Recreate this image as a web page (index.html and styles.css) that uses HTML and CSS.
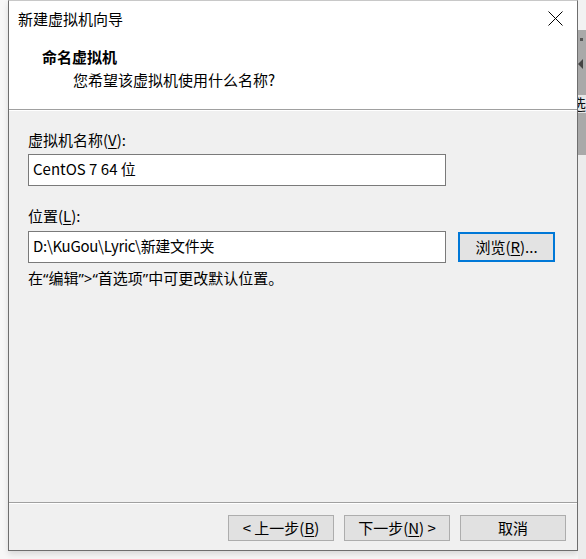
FILE: index.html
```html
<!DOCTYPE html>
<html lang="zh-CN">
<head>
<meta charset="utf-8">
<title>新建虚拟机向导</title>
<link rel="stylesheet" href="styles.css">
</head>
<body>
<div class="screen">
  <div class="gutter"></div>
  <div class="window">
    <div class="titlebar">
      <span class="title">新建虚拟机向导</span>
      <svg class="close" width="15" height="15" viewBox="0 0 15 15"><path d="M0.5 0.5 L14.5 14.5 M14.5 0.5 L0.5 14.5" stroke="#000" stroke-width="1" fill="none"/></svg>
    </div>
    <div class="header">
      <div class="head-title">命名虚拟机</div>
      <div class="head-sub">您希望该虚拟机使用什么名称?</div>
    </div>
    <div class="sep"></div>
    <div class="content">
      <div class="label">虚拟机名称(<u>V</u>):</div>
      <div class="field">CentOS 7 64 位</div>
      <div class="label label2">位置(<u>L</u>):</div>
      <div class="row">
        <div class="field field2">D:\KuGou\Lyric\新建文件夹</div>
        <div class="btn browse">浏览(<u>R</u>)...</div>
      </div>
      <div class="hint">在<span class="lat">“</span>编辑<span class="lat">”&gt;“</span>首选项<span class="lat">”</span>中可更改默认位置。</div>
    </div>
    <div class="sep"></div>
    <div class="footer">
      <div class="btn">&lt; 上一步(<u>B</u>)</div>
      <div class="btn">下一步(<u>N</u>) &gt;</div>
      <div class="btn">取消</div>
    </div>
  </div>
  <div class="desk">
    <div class="desk-top"></div>
    <div class="desk-mid">
      <span class="dot"></span>
      <span class="tri"></span>
      <span class="peek">选</span>
    </div>
    <div class="desk-bot"></div>
  </div>
</div>
</body>
</html>
```
FILE: styles.css
```css
html, body {
  margin: 0;
  padding: 0;
  background: #f6f6f6;
}
body {
  font-family: "Noto Sans CJK SC", "Noto Sans", sans-serif;
  font-size: 15px;
  color: #000;
}
.screen {
  display: flex;
  width: 586px;
  height: 559px;
  overflow: hidden;
}
.gutter {
  width: 8px;
  flex: none;
  background: #f7f7f7;
}
.window {
  width: 568px;
  height: 549px;
  flex: none;
  border: 1px solid #6e6e6e;
  border-top-color: #c8c8c8;
  display: flex;
  flex-direction: column;
  background: #f0f0f0;
  box-shadow: 0 3px 6px rgba(0,0,0,0.12);
}
.titlebar {
  height: 36px;
  background: #fff;
  display: flex;
  align-items: center;
  justify-content: space-between;
  padding-left: 9px;
}
.title {
  line-height: 36px;
}
.close {
  margin-right: 14px;
  margin-top: -1px;
}
.header {
  height: 72px;
  background: #fff;
  box-sizing: border-box;
  padding-top: 10px;
}
.head-title {
  font-weight: bold;
  line-height: 20px;
  padding-left: 33px;
}
.head-sub {
  line-height: 20px;
  padding-left: 64px;
  margin-top: 3px;
}
.sep {
  height: 1px;
  background: #a0a0a0;
  border-bottom: 1px solid #fff;
}
.content {
  flex: 1;
  padding: 19px 0 0 19px;
}
.label {
  line-height: 20px;
  margin-bottom: 4px;
}
.label2 {
  margin-top: 20px;
  margin-bottom: 5px;
}
.field {
  width: 418px;
  height: 32px;
  box-sizing: border-box;
  border: 1px solid #7a7a7a;
  background: #fff;
  padding-left: 4px;
  line-height: 28px;
  white-space: nowrap;
}
.field2 {
  letter-spacing: -0.3px;
}
.row {
  display: flex;
  align-items: center;
  gap: 12px;
}
.btn {
  width: 106px;
  height: 26px;
  box-sizing: border-box;
  border: 1px solid #adadad;
  background: #e1e1e1;
  text-align: center;
  line-height: 23px;
  white-space: nowrap;
}
.browse {
  width: 97px;
  height: 30px;
  border: 2px solid #0078d7;
  background: #e3e3e3;
  line-height: 25px;
}
.hint {
  line-height: 20px;
  margin-top: 5px;
}
.lat {
  font-family: "Noto Sans", sans-serif;
}
.footer {
  height: 46px;
  display: flex;
  justify-content: flex-end;
  gap: 10px;
  padding: 11px 11px 0 0;
  box-sizing: border-box;
}
u {
  text-decoration: underline;
  text-underline-offset: 2px;
}
.desk {
  width: 8px;
  flex: none;
  display: flex;
  flex-direction: column;
  overflow: hidden;
}
.desk-top {
  height: 30px;
  background: #f2f2f2;
}
.desk-mid {
  height: 125px;
  background: #a9a9a9;
  display: flex;
  flex-direction: column;
  align-items: flex-start;
}
.dot {
  width: 3px;
  height: 3px;
  background: #555;
  margin-top: 8px;
  margin-left: 2px;
}
.tri {
  width: 0;
  height: 0;
  border-top: 5px solid transparent;
  border-bottom: 5px solid transparent;
  border-right: 5px solid #444;
  margin-top: 18px;
}
.peek {
  margin-top: 26px;
  margin-left: -7px;
  font-size: 15px;
  line-height: 18px;
  background: #e6e6e6;
  color: #111;
}
.desk-bot {
  flex: 1;
  background: #ececec;
}
```
